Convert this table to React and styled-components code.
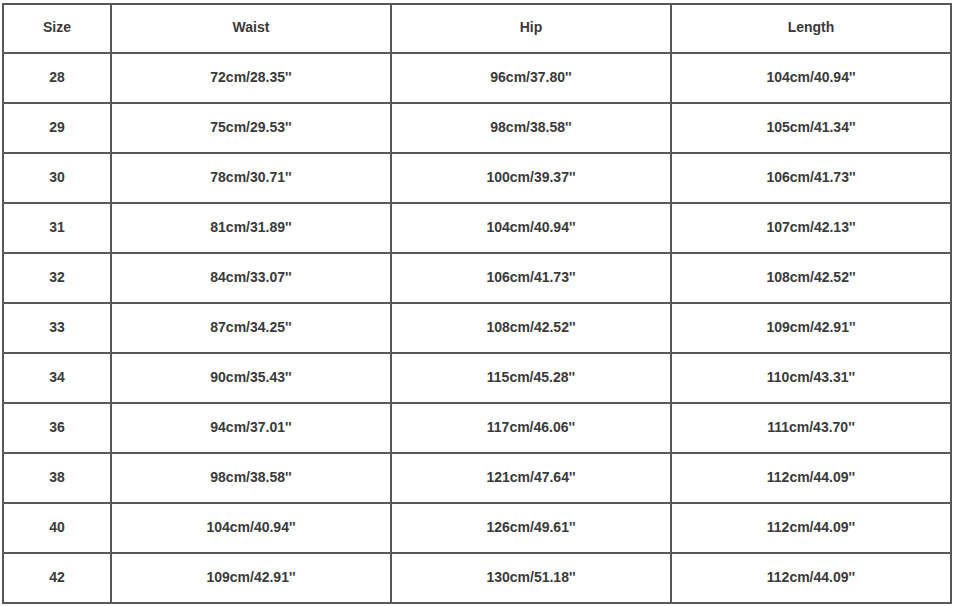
import React from 'react';
import styled, { createGlobalStyle } from 'styled-components';

const GlobalStyle = createGlobalStyle`
  html, body {
    margin: 0;
    padding: 0;
    background: #ffffff;
  }
  body {
    font-family: "Liberation Sans", Arial, sans-serif;
  }
`;

const Page = styled.div`
  padding: 3px 0 0 2px;
  width: 954px;
  height: 606px;
  box-sizing: border-box;
`;

const Table = styled.div`
  display: grid;
  grid-template-columns: 106px 278px 278px 278px;
  grid-template-rows: 47px repeat(11, 48px);
  gap: 2px;
  width: 950px;
  padding: 2px;
  box-sizing: border-box;
  background: #585858;
`;

const Cell = styled.div`
  display: flex;
  align-items: center;
  justify-content: center;
  background: #ffffff;
  color: #3a3a3a;
  font-size: 14px;
  font-weight: bold;
  padding-bottom: ${(p) => (p.$head ? '3px' : '2px')};
`;

const headers = ['Size', 'Waist', 'Hip', 'Length'];

const rows = [
  ['28', '72cm/28.35\'\'', '96cm/37.80\'\'', '104cm/40.94\'\''],
  ['29', '75cm/29.53\'\'', '98cm/38.58\'\'', '105cm/41.34\'\''],
  ['30', '78cm/30.71\'\'', '100cm/39.37\'\'', '106cm/41.73\'\''],
  ['31', '81cm/31.89\'\'', '104cm/40.94\'\'', '107cm/42.13\'\''],
  ['32', '84cm/33.07\'\'', '106cm/41.73\'\'', '108cm/42.52\'\''],
  ['33', '87cm/34.25\'\'', '108cm/42.52\'\'', '109cm/42.91\'\''],
  ['34', '90cm/35.43\'\'', '115cm/45.28\'\'', '110cm/43.31\'\''],
  ['36', '94cm/37.01\'\'', '117cm/46.06\'\'', '111cm/43.70\'\''],
  ['38', '98cm/38.58\'\'', '121cm/47.64\'\'', '112cm/44.09\'\''],
  ['40', '104cm/40.94\'\'', '126cm/49.61\'\'', '112cm/44.09\'\''],
  ['42', '109cm/42.91\'\'', '130cm/51.18\'\'', '112cm/44.09\'\''],
];

const App = () => (
  <>
    <GlobalStyle />
    <Page>
      <Table>
        {headers.map((h) => (
          <Cell key={h} $head>{h}</Cell>
        ))}
        {rows.map((row) =>
          row.map((v, i) => <Cell key={`${row[0]}-${i}`}>{v}</Cell>)
        )}
      </Table>
    </Page>
  </>
);

export default App;
